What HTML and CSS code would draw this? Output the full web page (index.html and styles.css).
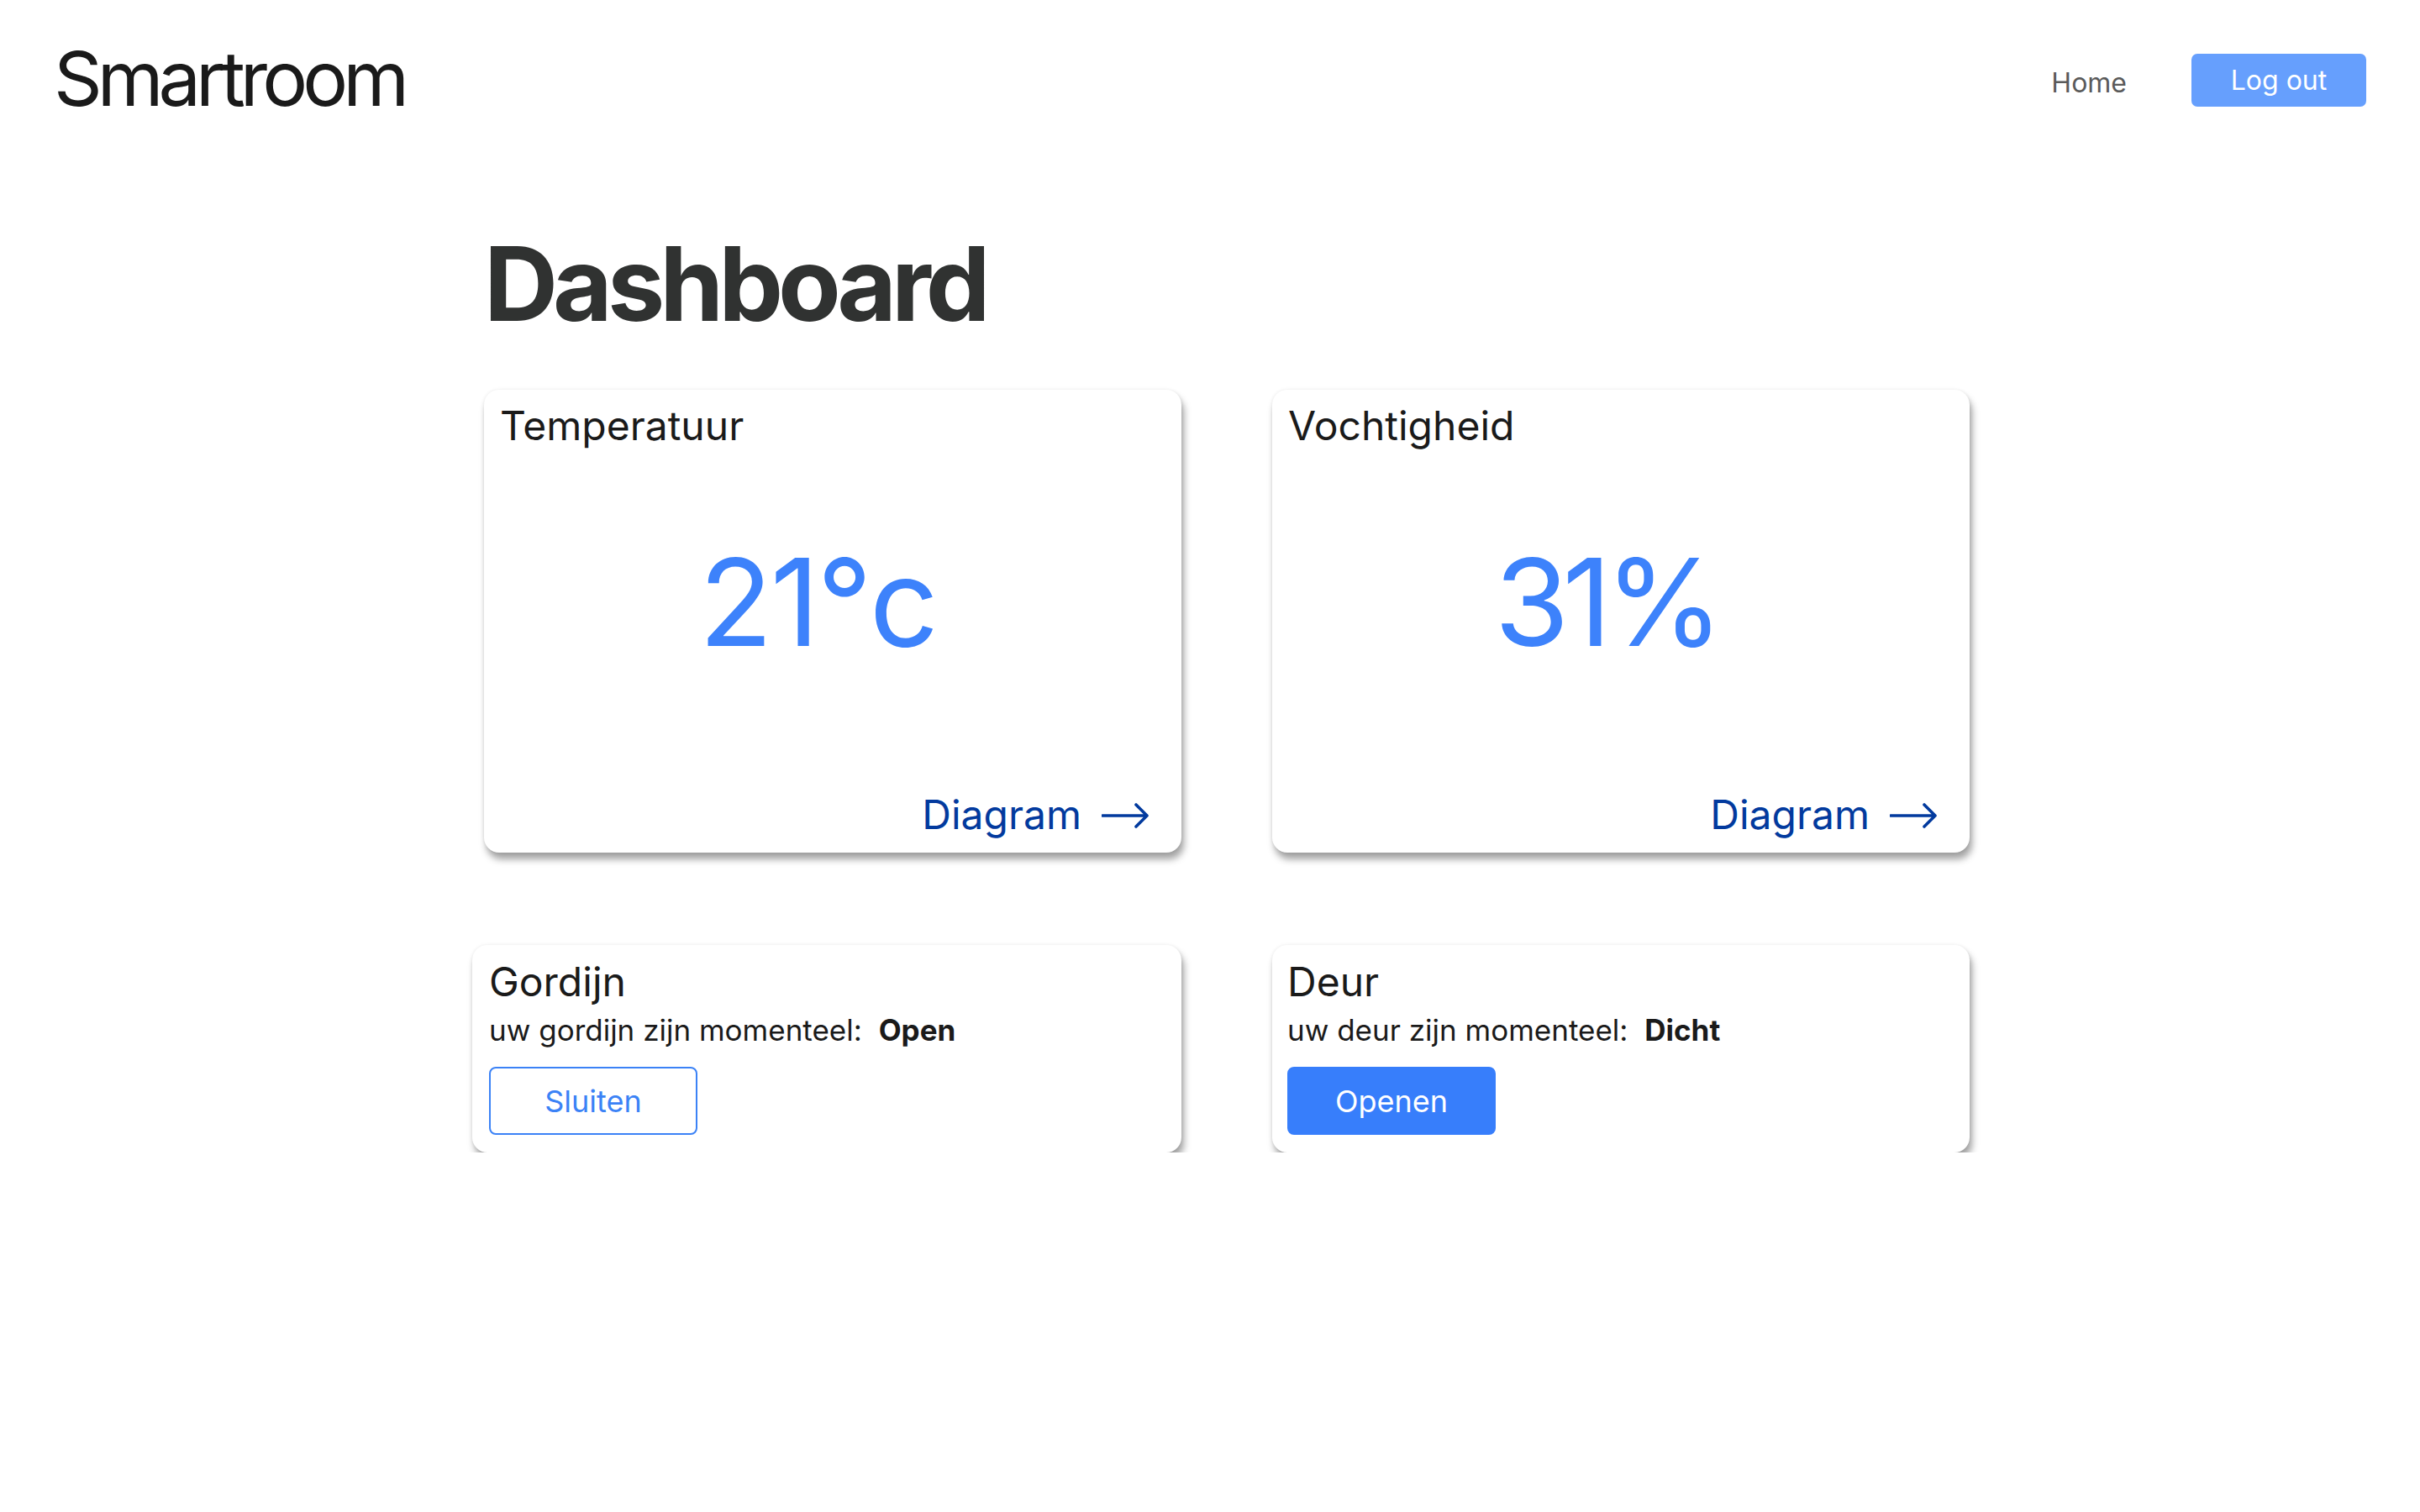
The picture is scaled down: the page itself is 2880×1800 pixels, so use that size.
FILE: index.html
```html
<!DOCTYPE html>
<html lang="nl">
<head>
<meta charset="utf-8">
<title>Smartroom</title>
<link rel="stylesheet" href="styles.css">
</head>
<body>
<header class="topbar">
  <div class="brand">Smartroom</div>
  <nav class="nav">
    <a class="nav-link" href="#">Home</a>
    <a class="btn-logout" href="#">Log out</a>
  </nav>
</header>
<main class="main">
  <h1 class="page-title">Dashboard</h1>
  <section class="grid">
    <article class="card card--metric">
      <h2 class="card-title">Temperatuur</h2>
      <div class="metric">21°c</div>
      <a class="diagram-link" href="#">Diagram
        <svg class="arrow" width="56" height="30" viewBox="0 0 56 30" aria-hidden="true"><path d="M1 15 H54 M41 2 L54 15 L41 28" fill="none" stroke="currentColor" stroke-width="3.6" stroke-linecap="round" stroke-linejoin="round"/></svg>
      </a>
    </article>
    <article class="card card--metric">
      <h2 class="card-title">Vochtigheid</h2>
      <div class="metric metric--tight">31%</div>
      <a class="diagram-link" href="#">Diagram
        <svg class="arrow" width="56" height="30" viewBox="0 0 56 30" aria-hidden="true"><path d="M1 15 H54 M41 2 L54 15 L41 28" fill="none" stroke="currentColor" stroke-width="3.6" stroke-linecap="round" stroke-linejoin="round"/></svg>
      </a>
    </article>
    <article class="card card--control card--wide">
      <h2 class="card-title">Gordijn</h2>
      <p class="status">uw gordijn zijn momenteel: <strong class="status-value">Open</strong></p>
      <button class="btn btn--outline" type="button">Sluiten</button>
    </article>
    <article class="card card--control">
      <h2 class="card-title">Deur</h2>
      <p class="status">uw deur zijn momenteel: <strong class="status-value">Dicht</strong></p>
      <button class="btn btn--solid" type="button">Openen</button>
    </article>
  </section>
</main>
</body>
</html>
```
FILE: styles.css
```css
* { box-sizing: border-box; }

html, body {
  margin: 0;
  background: #ffffff;
}

body {
  font-family: Inter, "Noto Sans", "Liberation Sans", sans-serif;
  color: #1a1a1a;
}

.topbar {
  display: flex;
  align-items: center;
  padding: 40px 64px 0 64px;
}

.brand {
  font-size: 90px;
  font-weight: 400;
  line-height: 1.21;
  letter-spacing: -6px;
  color: #1a1a1a;
}

.nav {
  margin-left: auto;
  display: flex;
  align-items: center;
  gap: 77px;
}

.nav-link {
  font-size: 32px;
  color: #5a5a5a;
  text-decoration: none;
  margin-top: 8px;
}

.btn-logout {
  display: flex;
  align-items: center;
  justify-content: center;
  height: 63px;
  width: 208px;
  margin-top: 2px;
  border-radius: 7px;
  background: #669ffd;
  color: #ffffff;
  font-size: 32px;
  text-decoration: none;
}

.main {
  padding-left: 576px;
}

.page-title {
  margin: 115px 0 52px 0;
  font-size: 122px;
  font-weight: 700;
  line-height: 1.21;
  letter-spacing: -6px;
  color: #303231;
}

.grid {
  display: grid;
  grid-template-columns: 830px 830px;
  column-gap: 108px;
  row-gap: 110px;
}

.card {
  background: #ffffff;
  border-radius: 18px;
  box-shadow: 0 0 4px rgba(0, 0, 0, 0.08), 3px 8px 8px rgba(0, 0, 0, 0.36);
}

.card-title {
  margin: 0;
  font-size: 48px;
  font-weight: 400;
  line-height: 1.21;
  color: #1a1a1a;
}

.card--metric {
  display: flex;
  flex-direction: column;
  padding: 14px 39px 16px 19px;
}

.metric {
  margin: 94px 16px 0 0;
  text-align: center;
  font-size: 144px;
  line-height: 1.21;
  letter-spacing: -3px;
  color: #3d82fb;
}

.metric--tight {
  letter-spacing: -8px;
}

.diagram-link {
  margin-top: 137px;
  align-self: flex-end;
  display: flex;
  align-items: center;
  gap: 24px;
  font-size: 48px;
  line-height: 1.21;
  color: #023a9e;
  text-decoration: none;
}

.arrow {
  display: block;
  margin-top: 2px;
}

.card--control {
  padding: 15px 18px 21px 18px;
}

.card--wide {
  margin-left: -14px;
  padding-left: 20px;
}

.status {
  margin: 7px 0 23px 0;
  font-size: 35px;
  line-height: 1.21;
  color: #1a1a1a;
}

.status-value {
  font-weight: 700;
  margin-left: 10px;
}

.btn {
  display: flex;
  align-items: center;
  justify-content: center;
  width: 248px;
  height: 81px;
  border-radius: 8px;
  font-family: inherit;
  font-size: 36px;
  cursor: pointer;
  padding: 0;
}

.btn--outline {
  background: #ffffff;
  border: 2px solid #3b82f6;
  color: #3b82f6;
}

.btn--solid {
  background: #377efb;
  border: 2px solid #377efb;
  color: #ffffff;
}
```
